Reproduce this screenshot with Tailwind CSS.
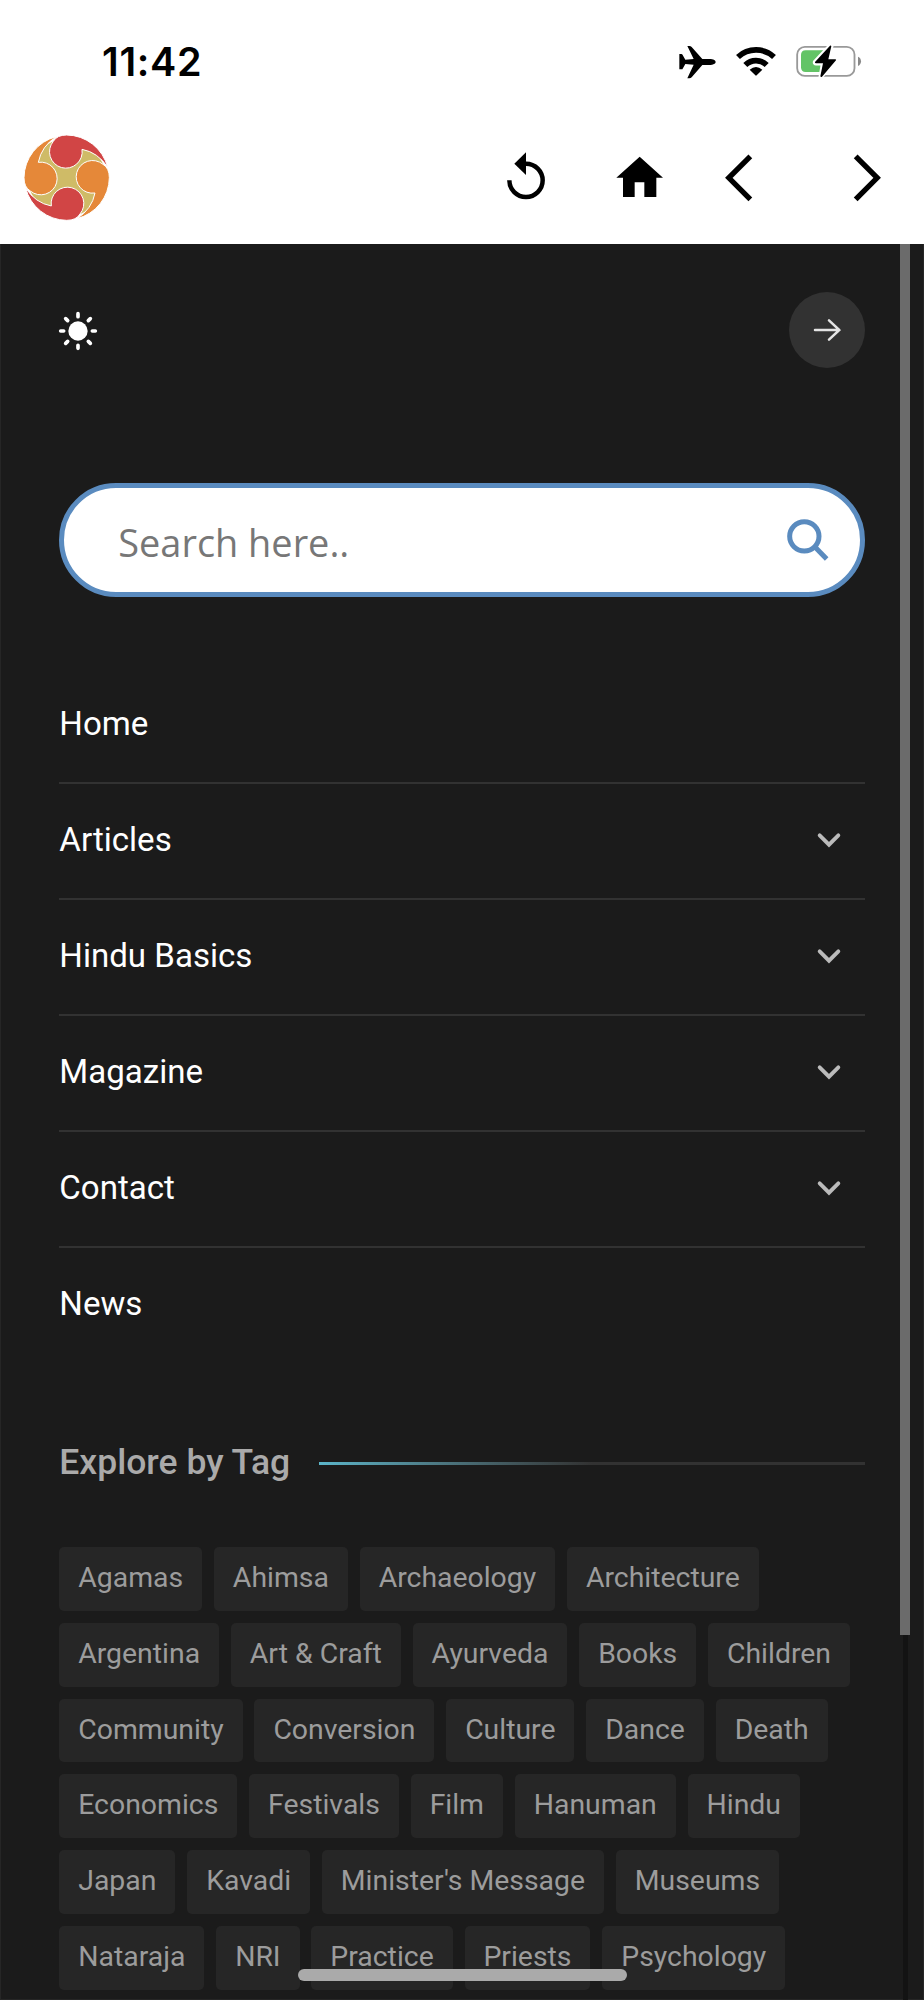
<!DOCTYPE html>
<html lang="en">
<head>
<meta charset="utf-8">
<meta name="viewport" content="width=device-width, initial-scale=1">
<title>Menu</title>
<script src="https://cdn.jsdelivr.net/npm/@tailwindcss/browser@4"></script>
</head>
<body class="bg-[#1b1b1b]">
<div class="relative flex flex-col w-[924px] h-[2000px] overflow-hidden bg-[#1b1b1b] font-['Roboto',sans-serif]">
  <header class="h-[244px] shrink-0 bg-white text-black">
    <div class="flex h-[124px] items-start pl-[102px] pr-[62px] pt-[44px]">
      <span class="mt-[-2px] font-['Inter',sans-serif] text-[39.5px] leading-[40px] font-semibold tracking-[0.7px]">11:42</span>
      <div class="ml-auto flex">
        <svg class="mr-[19px] w-[38px] h-[36px]" viewBox="650 132 114 108"><path d="M763 186c0 5-8 9-18 9h-22l-32 37c-2 2-4 3-7 3h-6l19-41-25-2-8 14c-1 2-2 2-4 2h-6V162h6c2 0 3 1 4 3l8 14 25-2-19-39h6c3 0 5 1 7 3l32 36h22c10 0 18 4 18 9z"/></svg>
        <svg class="mr-[18px] w-[42px] h-[36px]" viewBox="822 132 126 108"><g fill="none" stroke="#000" stroke-width="17"><path d="M831 171A79 79 0 0 1 939 171"/><path d="M853 195A45 45 0 0 1 917 195"/></g><path d="M866 209Q885 193 904 209L887 226Q885 228 883 226Z"/></svg>
        <svg class="w-[67px] h-[36px]" viewBox="1001 132 201 108"><rect x="1007.500" y="140.500" width="172" height="87" rx="23" fill="none" stroke="#999" stroke-width="5.500"/><path d="M1190 170q9 4 9 14t-9 14z" fill="#888"/><path d="M1033 151h58v65h-58q-14 0-14-14v-37q0-14 14-14z" fill="#63c466"/><path d="M1106 138L1061 186Q1060 190 1064 190H1085L1078 231L1124 181Q1126 178 1121 178H1100L1110 138Z" stroke="#fff" stroke-width="13" stroke-linejoin="round" fill="#fff"/><path d="M1102 194V151H1118L1160 216H1095Z" fill="#fff"/><path d="M1106 137L1061 186Q1060 190 1064 190H1085L1077 229Q1079 233 1082 230L1124 181Q1126 178 1121 178H1101L1110 139Q1109 135 1106 137Z"/></svg>
      </div>
    </div>
    <div class="flex items-start pl-[23px] pr-[42px]">
      <svg class="mt-[10px] w-[88px] h-[88px]" viewBox="69 402 264 264">
        <defs><path id="petal" d="M246 448A49 49 0 1 1 160 424Q171 405 200 405A128 128 0 0 1 323 502Q294 457 246 448Z"/></defs>
        <circle cx="200" cy="533" r="116" fill="#cfbb67"/>
        <g stroke="#fff" stroke-width="3">
          <use href="#petal" fill="#d14545"/>
          <use href="#petal" fill="#e58839" transform="rotate(90 200 533)"/>
          <use href="#petal" fill="#d14545" transform="rotate(180 200 533)"/>
          <use href="#petal" fill="#e58839" transform="rotate(270 200 533)"/>
        </g>
      </svg>
      <svg class="ml-auto mt-[26px] w-[40px] h-[56px]" viewBox="132 450 120 168"><path d="M142 541A50 50 0 1 0 192 491" fill="none" stroke="#000" stroke-width="13.500"/><path d="M192 457V525L157 491Z"/></svg>
      <svg class="ml-[70px] mt-[26px] w-[48px] h-[56px]" viewBox="462 450 144 168"><path d="M533 470L603 533H583V591H547V547H518V591H483V533H463Z"/></svg>
      <svg class="ml-[60px] mt-[26px] w-[30px] h-[56px]" viewBox="786 450 90 168"><path d="M865 469L800.500 533.500L865 598" fill="none" stroke="#000" stroke-width="16"/></svg>
      <svg class="ml-[98px] mt-[26px] w-[30px] h-[56px]" viewBox="1170 450 90 168"><path d="M1181 469L1245.500 533.500L1181 598" fill="none" stroke="#000" stroke-width="16"/></svg>
    </div>
  </header>

  <main class="flex-1 border-x border-b border-[#262626] pl-[58.300px] pr-[58.300px] pt-[48px]">
    <div class="flex h-[76px] items-center justify-between">
      <svg class="ml-[-1px] mt-[2px] w-[40px] h-[40px]" viewBox="-60 -60 120 120" fill="#fff" stroke="#fff" stroke-width="11" stroke-linecap="round"><circle r="29" stroke="none"/><path d="M0-43V-52M0 43V52M-43 0H-52M43 0H52M31-31L37-37M-31-31L-37-37M31 31L37 37M-31 31L-37 37"/></svg>
      <div class="flex size-[76px] items-center justify-center rounded-full bg-[#323232]">
        <svg class="w-[30px] h-[26px]" viewBox="1050 141 90 78" fill="none" stroke="#e4e4e4" stroke-width="7.500" stroke-linecap="round"><path d="M1059 180H1132M1101 151L1132 180L1101 209"/></svg>
      </div>
    </div>

    <div class="mt-[115.300px] flex h-[114px] items-center justify-between rounded-full border-[5px] border-[#5a8bbf] bg-white pl-[54px] pr-[30px]">
      <span class="mt-[3px] font-['Open_Sans',sans-serif] text-[37.900px] leading-[48px] text-[#777]">Search here..</span>
      <svg class="mb-[1px] w-[44px] h-[44px]" viewBox="971 744 132 132" fill="none" stroke="#5a8bbf" stroke-width="15"><circle cx="1026" cy="799" r="44"/><path d="M1058 831L1093 867"/></svg>
    </div>

    <nav class="mt-[70.700px] flex flex-col text-[33.100px] text-white">
      <a class="flex h-[116.080px] items-center justify-between border-b-[2.370px] border-[#323232] pb-[3px]">Home</a>
      <a class="flex h-[116.080px] items-center justify-between border-b-[2.370px] border-[#323232] pb-[3.500px] pr-[22.500px]">Articles<svg class="mt-[1px] w-[26px] h-[18px]" viewBox="762 153 78 54" fill="none" stroke="#bbb" stroke-width="11.500" stroke-linecap="round"><path d="M773 166L801 194L829 166"/></svg></a>
      <a class="flex h-[116.080px] items-center justify-between border-b-[2.370px] border-[#323232] pb-[3.500px] pr-[22.500px]">Hindu Basics<svg class="mt-[1px] w-[26px] h-[18px]" viewBox="762 153 78 54" fill="none" stroke="#bbb" stroke-width="11.500" stroke-linecap="round"><path d="M773 166L801 194L829 166"/></svg></a>
      <a class="flex h-[116.080px] items-center justify-between border-b-[2.370px] border-[#323232] pb-[3.500px] pr-[22.500px]">Magazine<svg class="mt-[1px] w-[26px] h-[18px]" viewBox="762 153 78 54" fill="none" stroke="#bbb" stroke-width="11.500" stroke-linecap="round"><path d="M773 166L801 194L829 166"/></svg></a>
      <a class="flex h-[116.080px] items-center justify-between border-b-[2.370px] border-[#323232] pb-[3.500px] pr-[22.500px]">Contact<svg class="mt-[1px] w-[26px] h-[18px]" viewBox="762 153 78 54" fill="none" stroke="#bbb" stroke-width="11.500" stroke-linecap="round"><path d="M773 166L801 194L829 166"/></svg></a>
      <a class="flex h-[114px] items-center pb-[3px]">News</a>
    </nav>

    <div class="mt-[75px] flex h-[52px] items-center gap-[29px]">
      <h2 class="mt-[-3px] whitespace-nowrap text-[35.500px] leading-[48px] font-medium text-[#aaa]">Explore by Tag</h2>
      <div class="h-[2.400px] flex-1 bg-linear-to-r from-[#5bb5c9] to-[#323232] to-50%"></div>
    </div>

    <div class="mt-[57.500px] flex flex-wrap gap-[11.850px] text-[28.400px] leading-[62.500px] text-[#9c9c9c] *:h-[63.970px] *:rounded-[5px] *:bg-[#262626] *:px-[18.950px] *:whitespace-nowrap">
      <a>Agamas</a><a>Ahimsa</a><a>Archaeology</a><a>Architecture</a>
      <a>Argentina</a><a>Art &amp; Craft</a><a>Ayurveda</a><a>Books</a><a>Children</a>
      <a>Community</a><a>Conversion</a><a>Culture</a><a>Dance</a><a>Death</a>
      <a>Economics</a><a>Festivals</a><a>Film</a><a>Hanuman</a><a>Hindu</a>
      <a>Japan</a><a>Kavadi</a><a>Minister's Message</a><a>Museums</a>
      <a>Nataraja</a><a>NRI</a><a>Practice</a><a>Priests</a><a>Psychology</a>
    </div>
  </main>

  <!-- scrollbar -->
  <div class="absolute right-[14px] top-[244px] bottom-0 flex w-[10px] flex-col items-center">
    <div class="h-[1391px] w-full bg-[#6b6b6b]"></div>
    <div class="w-[5px] flex-1 bg-[#131313]"></div>
  </div>
  <!-- home indicator -->
  <div class="absolute left-[298px] top-[1969px] h-[12px] w-[329px] rounded-full bg-[#aaa]"></div>
</div>
</body>
</html>
